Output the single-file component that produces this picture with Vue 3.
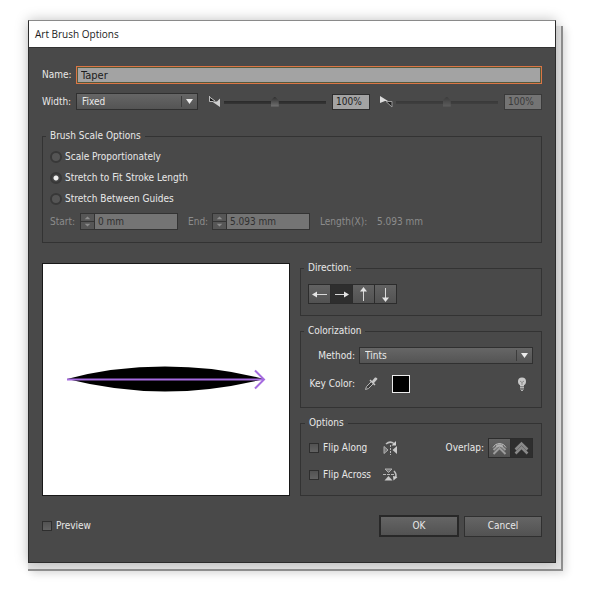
<script setup>
import { ref } from 'vue'

const name = ref('Taper')
const widthMode = ref('Fixed')
const widthStart = ref(100)
const widthEnd = ref(100)
const scale = ref('stretch')
const scaleOptions = [
  { value: 'proportional', label: 'Scale Proportionately' },
  { value: 'stretch', label: 'Stretch to Fit Stroke Length' },
  { value: 'guides', label: 'Stretch Between Guides' },
]
const direction = ref('right')
const directions = [
  { value: 'left', label: 'Left', line: 'M4 10.5H18', head: 'M3 10.5L8 7.5V13.5Z' },
  { value: 'right', label: 'Right', line: 'M4 10.5H16', head: 'M18 10.5L13 7.5V13.5Z' },
  { value: 'up', label: 'Up', line: 'M10.5 5V17', head: 'M10.5 3L7 7.5H14Z' },
  { value: 'down', label: 'Down', line: 'M10.5 4V15', head: 'M10.5 18L7 13.5H14Z' },
]
const method = ref('Tints')
const flipAlong = ref(false)
const flipAcross = ref(false)
const overlap = ref('adjust')
const preview = ref(false)
</script>

<template>
  <main class="page">
    <section class="dialog" aria-labelledby="dialog-title">
      <h1 id="dialog-title" class="title">Art Brush Options</h1>
      <form class="content" @submit.prevent>
        <div class="row name-row">
          <label class="lead" for="name">Name:</label>
          <input id="name" v-model="name" class="name" type="text" autofocus />
        </div>

        <div class="row width-row">
          <label class="lead" for="width">Width:</label>
          <span class="select width-select">
            <select id="width" v-model="widthMode">
              <option>Fixed</option>
              <option>Random</option>
              <option>Pressure</option>
            </select>
            <svg viewBox="0 0 16 15" aria-hidden="true"><path class="sep" d="M.5 2V13" /><path d="M5 5H12L8.5 10Z" /></svg>
          </span>
          <div class="slider">
            <svg class="wedge" viewBox="0 0 13 12" aria-hidden="true">
              <path d="M1 1V5L6 5Z" fill="#181818" /><path d="M1.500 0V5.500H5M1.500 1L7 5" fill="none" stroke="#bdbdbd" />
              <path d="M4 5.500H9L12 2.500V11Z" fill="#cfcfcf" />
            </svg>
            <input v-model="widthStart" type="range" min="1" max="200" aria-label="Width" />
            <output class="percent">{{ widthStart }}%</output>
          </div>
          <div class="slider off">
            <svg class="wedge" viewBox="0 0 13 12" aria-hidden="true">
              <path d="M0 0L8 5H5L0 7Z" fill="#dcdcdc" /><path d="M6 5.500H12V11Z" fill="#202020" stroke="#9a9a9a" />
            </svg>
            <input v-model="widthEnd" type="range" min="1" max="200" disabled aria-label="Maximum width" />
            <output class="percent">{{ widthEnd }}%</output>
          </div>
        </div>

        <fieldset class="group scale">
          <legend>Brush Scale Options</legend>
          <label v-for="o in scaleOptions" :key="o.value" class="radio">
            <input v-model="scale" type="radio" name="scale" :value="o.value" />{{ o.label }}
          </label>
          <div class="guides">
            <label for="start">Start:</label>
            <span class="stepper">
              <svg viewBox="0 0 14 15" aria-hidden="true"><path class="mid" d="M0 7.500H14" /><path d="M4 5L7 2L10 5ZM4 10H10L7 13Z" /></svg>
              <input id="start" type="text" value="0 mm" disabled />
            </span>
            <label for="end">End:</label>
            <span class="stepper">
              <svg viewBox="0 0 14 15" aria-hidden="true"><path class="mid" d="M0 7.500H14" /><path d="M4 5L7 2L10 5ZM4 10H10L7 13Z" /></svg>
              <input id="end" type="text" value="5.093 mm" disabled />
            </span>
            <span class="length">Length(X):</span>
            <span>5.093 mm</span>
          </div>
        </fieldset>

        <div class="columns">
          <div class="canvas">
            <svg viewBox="0 0 246 230" role="img" aria-label="Brush shape">
              <path d="M24 114.500Q70 102 122 102T221 114.500Q170 127 122 127T24 114.500Z" fill="#000" />
              <path d="M24 115H221" stroke="#a56be0" stroke-width="2" />
              <path d="M212 106L221 115L212 124" fill="none" stroke="#a56be0" stroke-width="2" />
            </svg>
          </div>

          <div class="settings">
            <fieldset class="group direction">
              <legend>Direction:</legend>
              <div class="segments">
                <button v-for="d in directions" :key="d.value" type="button" :class="{ on: direction === d.value }" :aria-label="d.label" :aria-pressed="direction === d.value" @click="direction = d.value">
                  <svg viewBox="0 0 21 20" aria-hidden="true"><path :d="d.line" stroke="#d8d8d8" /><path :d="d.head" fill="#e4e4e4" /></svg>
                </button>
              </div>
            </fieldset>

            <fieldset class="group color">
              <legend>Colorization</legend>
              <div class="color-row">
                <label for="method">Method:</label>
                <span class="select">
                  <select id="method" v-model="method">
                    <option>None</option>
                    <option>Tints</option>
                    <option>Tints and Shades</option>
                    <option>Hue Shift</option>
                  </select>
                  <svg viewBox="0 0 16 15" aria-hidden="true"><path class="sep" d="M.5 2V13" /><path d="M5 5H12L8.5 10Z" /></svg>
                </span>
              </div>
              <div class="color-row key-row">
                <span>Key Color:</span>
                <button class="icon" type="button" aria-label="Pick key color">
                  <svg viewBox="0 0 16 16" width="16" height="16" aria-hidden="true">
                    <path d="M2.500 13.500L3.500 10.500L9 5L11 7L5.500 12.500Z" fill="#3c3c3c" stroke="#b4b4b4" />
                    <path d="M7 4L12 9" stroke="#c8c8c8" stroke-width="1.500" />
                    <path d="M9 5L12 1.500Q14 1 14.500 3L11 7Z" fill="#c8c8c8" />
                  </svg>
                </button>
                <button class="swatch" type="button" aria-label="Key color"></button>
                <button class="icon tips" type="button" aria-label="Tips">
                  <svg viewBox="0 0 10 14" width="10" height="14" aria-hidden="true">
                    <circle cx="5" cy="4.500" r="4" fill="#c8c8c8" /><path d="M3 7H7V9.500H3Z" fill="#c8c8c8" />
                    <path d="M3 4L5 5.500L7 4M5 5.500V8" fill="none" stroke="#8a8a8a" />
                    <path d="M3 10.500H7M3 12H7M4 13.500H6" stroke="#b4b4b4" />
                  </svg>
                </button>
              </div>
            </fieldset>

            <fieldset class="group options">
              <legend>Options</legend>
              <div class="option-row">
                <label class="check"><input v-model="flipAlong" type="checkbox" />Flip Along</label>
                <svg class="flip" viewBox="0 0 15 14" aria-hidden="true">
                  <path d="M7.500 4V14" stroke="#b8b8b8" stroke-dasharray="2 1" />
                  <path d="M1 5.500V12.500L5 9Z" fill="#777" stroke="#b0b0b0" /><path d="M14 5V13L9.500 9Z" fill="#c8c8c8" />
                  <path d="M3 3Q7 -.5 11 2.500" fill="none" stroke="#c0c0c0" stroke-width="1.500" /><path d="M13 0V4.500H8.500Z" fill="#d0d0d0" />
                </svg>
                <span class="overlap">Overlap:</span>
                <div class="segments">
                  <button type="button" :class="{ on: overlap === 'keep' }" aria-label="Do not adjust corners and folds" @click="overlap = 'keep'">
                    <svg viewBox="0 0 21 20" aria-hidden="true">
                      <path d="M4.500 12L10.500 6.500L16.500 12M4.500 16L10.500 10L16.500 16" fill="none" stroke="#9c9c9c" stroke-width="2" />
                      <path d="M4 9.500Q6 5.500 10.500 5.500T17 9.500M7 8H14" fill="none" stroke="#c4c4c4" />
                    </svg>
                  </button>
                  <button type="button" :class="{ on: overlap === 'adjust' }" aria-label="Adjust corners and folds" @click="overlap = 'adjust'">
                    <svg viewBox="0 0 21 20" aria-hidden="true">
                      <path d="M4.500 11.500L10.500 5.500L16.500 11.500M4.500 15.500L10.500 9.500L16.500 15.500" fill="none" stroke="#888" stroke-width="2.500" />
                    </svg>
                  </button>
                </div>
              </div>
              <div class="option-row">
                <label class="check"><input v-model="flipAcross" type="checkbox" />Flip Across</label>
                <svg class="flip" viewBox="0 0 15 14" aria-hidden="true">
                  <path d="M0 6.500H11" stroke="#b8b8b8" stroke-dasharray="3 1" />
                  <path d="M2 1H9L5.500 4.500Z" fill="#777" stroke="#b0b0b0" /><path d="M1.500 12.500H9.500L5.500 8Z" fill="#c8c8c8" />
                  <path d="M11 3Q14 6 12.500 10" fill="none" stroke="#c0c0c0" stroke-width="1.500" /><path d="M10 8L14.500 9L10.500 12.500Z" fill="#d0d0d0" />
                </svg>
              </div>
            </fieldset>
          </div>
        </div>

        <div class="footer">
          <label class="check"><input v-model="preview" type="checkbox" />Preview</label>
          <button class="push primary" type="submit">OK</button>
          <button class="push" type="button">Cancel</button>
        </div>
      </form>
    </section>
  </main>
</template>

<style>
body {
  background: #fff;
}
</style>

<style scoped>
* {
  box-sizing: border-box;
}
.page {
  padding: 20px 44px 36px 28px;
  font: 10px/16px "DejaVu Sans Condensed", "DejaVu Sans", sans-serif;
  color: #e8e8e8;
}
input,
select,
button {
  margin: 0;
  padding: 0;
  font: inherit;
  color: inherit;
  border-radius: 0;
}
button {
  display: flex;
  align-items: center;
  justify-content: center;
}
svg {
  flex: none;
  display: block;
}
.dialog {
  position: relative;
  border: 1px solid #2c2c2c;
  border-top-color: #8a8a8a;
  background: #494949;
  box-shadow: 0 0 12px rgba(0, 0, 0, 0.25);
}
.dialog::after {
  content: "";
  position: absolute;
  inset: 5px -8px -9px -1px;
  z-index: -1;
  border: solid #929292;
  border-width: 0 2px 2px 0;
  background: #e6e6e6;
  box-shadow: 3px 3px 8px rgba(0, 0, 0, 0.12);
}
.title {
  margin: 0;
  padding: 5px 6px;
  border-bottom: 1px solid #333;
  background: #fff;
  color: #1c1c1c;
  font: 10px/16px "Open Sans", sans-serif;
}
.content {
  padding: 18px 13px 25px;
}
.row {
  display: flex;
  align-items: center;
}
.lead {
  flex: none;
  width: 34px;
}
.name {
  flex: 1;
  min-width: 0;
  height: 18px;
  padding: 0 4px;
  border: 1px solid #dc7545;
  outline: none;
  box-shadow: inset 0 0 0 1px #55593b;
  background: #a3a3a3;
  color: #1c1c1c;
  font-size: 11px;
}
.width-row {
  margin-top: 9px;
}
.select {
  position: relative;
  display: block;
  flex: 1;
  height: 17px;
  border: 1px solid #303030;
  background: linear-gradient(#666, #545454);
}
.select select {
  display: block;
  width: 100%;
  height: 15px;
  padding: 0 20px 0 5px;
  border: 0;
  appearance: none;
  background: none;
}
.select option {
  background: #545454;
}
.select svg {
  position: absolute;
  top: 0;
  right: 0;
  width: 16px;
  height: 15px;
  fill: #ececec;
  pointer-events: none;
}
.sep {
  stroke: #3c3c3c;
}
.width-select {
  flex: none;
  width: 122px;
}
.slider {
  display: flex;
  flex: 1;
  align-items: center;
  min-width: 0;
  margin-left: 10px;
}
.wedge {
  width: 13px;
  height: 12px;
  margin-right: 3px;
}
.slider input {
  flex: 1;
  width: 0;
  min-width: 0;
  height: 16px;
  margin-right: 6px;
  appearance: none;
  background: none;
}
.slider input::-webkit-slider-runnable-track {
  height: 10px;
  background: linear-gradient(transparent 4px, #2a2a2a 4px, #363636 7px, transparent 7px);
}
.slider input::-webkit-slider-thumb {
  width: 8px;
  height: 10px;
  appearance: none;
  background: linear-gradient(#303030, #747474);
  clip-path: polygon(50% 0, 100% 40%, 100% 100%, 0 100%, 0 40%);
}
.percent {
  flex: none;
  width: 38px;
  height: 16px;
  padding-left: 3px;
  border: 1px solid #2e2e2e;
  background: #a3a3a3;
  color: #1c1c1c;
  line-height: 14px;
}
.off input {
  opacity: 0.5;
}
.off .percent {
  border-color: #3a3a3a;
  background: #747474;
  color: #3a3a3a;
}
.group {
  min-width: 0;
  margin: 0;
  padding: 0 8px;
  border: 1px solid #333;
}
.group legend {
  margin-left: -4px;
  padding: 0 4px;
}
.scale {
  margin-top: 18px;
  padding: 2px 7px 12px;
}
.radio {
  display: flex;
  align-items: center;
  height: 21px;
  gap: 3px;
}
.radio input {
  width: 12px;
  height: 12px;
  appearance: none;
  border: 2px solid #383838;
  border-radius: 50%;
  background: #555;
}
.radio input:checked {
  background: radial-gradient(circle, #f0f0f0 2px, #444 3px);
}
.guides {
  display: flex;
  align-items: center;
  margin-top: 4px;
  color: #8c8c8c;
}
.guides label {
  width: 30px;
}
.stepper {
  display: flex;
  width: 98px;
  height: 17px;
  margin-right: 10px;
  border: 1px solid #333;
  background: #747474;
}
.guides .stepper + label {
  width: 24px;
}
.stepper svg {
  width: 14px;
  height: 15px;
  border-right: 1px solid #333;
  background: #565656;
  fill: #8c8c8c;
}
.mid {
  stroke: #333;
}
.stepper input {
  flex: 1;
  min-width: 0;
  padding-left: 3px;
  border: 0;
  background: none;
  color: #303030;
}
.length {
  width: 57px;
}
.columns {
  display: flex;
  gap: 10px;
  margin-top: 17px;
}
.canvas {
  flex: 1;
  min-width: 0;
  margin-top: 3px;
  border: 1px solid #181818;
  background: #fff;
}
.canvas svg {
  width: 100%;
  height: 100%;
}
.settings {
  display: flex;
  flex-direction: column;
  gap: 7px;
  width: 242px;
}
.direction {
  padding: 8px 7px 11px;
}
.segments {
  display: flex;
  width: max-content;
  border: 1px solid #2c2c2c;
}
.segments button {
  width: 21px;
  height: 18px;
  border: 0;
  background: linear-gradient(#626262, #525252);
}
.segments button + button {
  width: 22px;
  border-left: 1px solid #2c2c2c;
}
.segments .on {
  background: #2e2e2e;
}
.segments svg {
  width: 21px;
  height: 20px;
}
.color {
  padding: 8px 8px 13px 7px;
}
.color-row {
  display: flex;
  align-items: center;
}
.color-row > :first-child {
  width: 51px;
  padding-right: 4px;
  text-align: right;
  white-space: nowrap;
}
.key-row {
  height: 20px;
  margin-top: 10px;
}
.icon {
  border: 0;
  background: none;
}
.key-row .icon {
  margin-left: 4px;
}
.key-row .tips {
  margin: 0 6px 0 auto;
}
.swatch {
  width: 18px;
  height: 18px;
  margin-left: 13px;
  border: 1px solid #ececec;
  background: #000;
}
.options {
  padding: 7px 8px 10px;
}
.option-row {
  display: flex;
  align-items: center;
  height: 20px;
}
.option-row + .option-row {
  margin-top: 7px;
}
.check {
  display: flex;
  align-items: center;
  gap: 4px;
}
.option-row .check {
  width: 74px;
  white-space: nowrap;
}
.check input {
  width: 10px;
  height: 10px;
  appearance: none;
  border: 1px solid #2e2e2e;
  background: linear-gradient(#525252, #626262);
}
.check input:checked {
  background: #e2e2e2;
}
.flip {
  width: 15px;
  height: 14px;
}
.overlap {
  margin: 0 4px 0 auto;
}
.footer {
  display: flex;
  align-items: center;
  gap: 5px;
  margin-top: 19px;
}
.footer .check {
  margin-right: auto;
}
.push {
  width: 78px;
  height: 21px;
  border: 1px solid #303030;
  background: linear-gradient(#656565, #525252);
}
.primary {
  width: 80px;
  height: 22px;
  border: 2px solid #282828;
}
</style>
